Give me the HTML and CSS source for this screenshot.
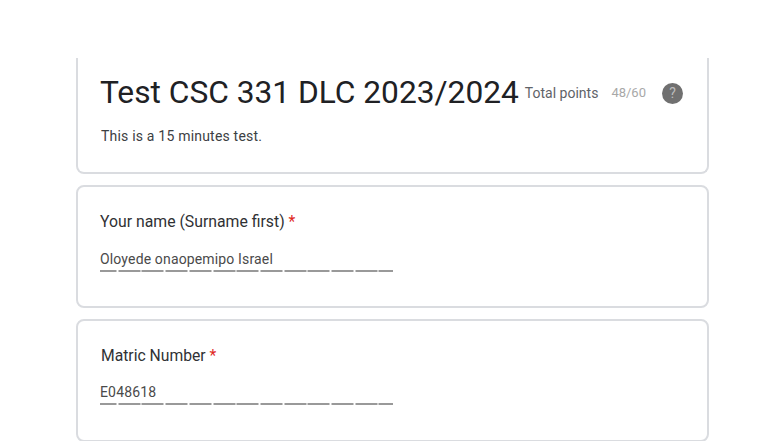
FILE: index.html
```html
<!DOCTYPE html>
<html lang="en">
<head>
<meta charset="utf-8">
<title>Test CSC 331 DLC 2023/2024</title>
<link rel="stylesheet" href="styles.css">
</head>
<body>
<main class="form">
  <section class="card card-head">
    <div class="head-row">
      <h1 class="title">Test CSC 331 DLC 2023/2024</h1>
      <span class="points-label">Total points</span>
      <span class="points-value">48/60</span>
      <span class="help">?</span>
    </div>
    <p class="desc">This is a 15 minutes test.</p>
  </section>
  <section class="card card-q">
    <div class="question">Your name (Surname first) <span class="req">*</span></div>
    <div class="answer">Oloyede onaopemipo Israel</div>
    <div class="dashes"></div>
  </section>
  <section class="card card-q">
    <div class="question q-alt">Matric Number <span class="req">*</span></div>
    <div class="answer">E048618</div>
    <div class="dashes"></div>
  </section>
</main>
</body>
</html>
```

FILE: styles.css
```css
html, body { margin: 0; padding: 0; background: #fff; }
body { width: 784px; height: 441px; overflow: hidden; font-family: Roboto, "Liberation Sans", sans-serif; color: #202124; }
.form { display: flex; flex-direction: column; gap: 11px; width: 633px; margin-left: 76px; padding-top: 58px; }
.card { box-sizing: border-box; border: 2px solid #dadce0; border-radius: 8px; padding-left: 22px; background: #fff; }
.card-head { height: 116px; border-top: 0; border-top-left-radius: 0; border-top-right-radius: 0; }
.card-q { height: 123px; padding-top: 25px; }
.head-row { display: flex; align-items: center; height: 33px; margin-top: 18px; }
.title { margin: 0; font-size: 31.7px; font-weight: 400; line-height: 33px; white-space: nowrap; }
.points-label { margin-left: 6px; font-size: 14px; color: #5f6368; white-space: nowrap; }
.points-value { margin-left: 13px; font-size: 13px; color: #a8a8a8; }
.help { display: flex; align-items: center; justify-content: center; width: 21px; height: 21px; margin: 1px 0 0 16px; border-radius: 50%; background: #707070; color: #bdbdbd; font-size: 14px; }
.desc { margin: 17px 0 0 1px; font-size: 14px; line-height: 20px; letter-spacing: 0.2px; color: #3c4043; }
.question { font-size: 15.8px; line-height: 20px; color: #303134; }
.q-alt { margin-left: 1px; margin-bottom: -1px; font-size: 15.7px; }
.req { color: #e0281e; }
.answer { margin-top: 18px; font-size: 14px; line-height: 18px; letter-spacing: 0.15px; color: #4a4a4a; }
.dashes { width: 293px; height: 1.5px; margin-top: 2px; background: repeating-linear-gradient(90deg, #999 0 22px, #fff 22px 23.7px) -5.5px 0; }
```
